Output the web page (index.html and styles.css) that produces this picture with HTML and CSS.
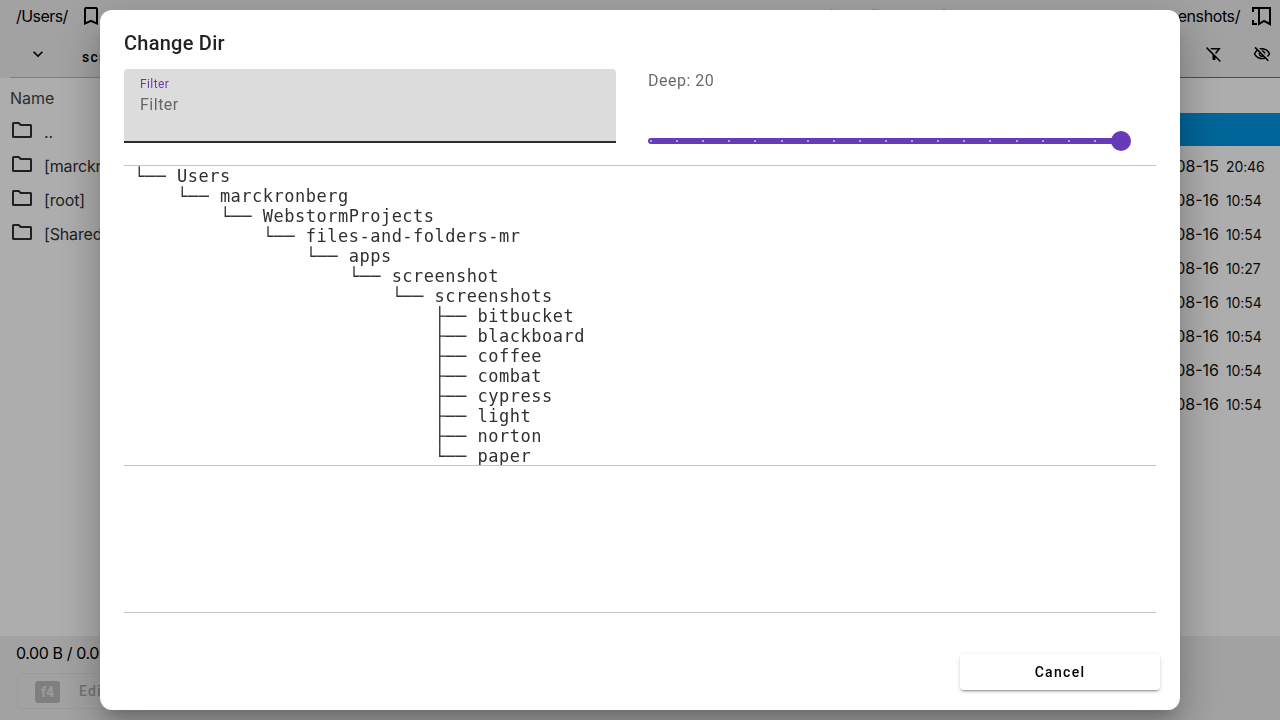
FILE: index.html
```html
<!DOCTYPE html>
<html lang="en">
<head>
<meta charset="utf-8">
<title>Change Dir</title>
<link rel="stylesheet" href="styles.css">
</head>
<body>
<svg class="defs"><symbol id="folder" viewBox="0 0 24 24"><path d="M3 5.500q0-.5.5-.5h5.200l2 2h9.800q.5 0 .5.5v11q0 .5-.5.5h-17q-.5 0-.5-.5z" fill="none" stroke="currentColor" stroke-width="2" stroke-linejoin="round"/></symbol></svg>
<div class="app">
  <header class="panes top">
    <section class="pane">
      <div class="path"><span>/Users/</span>
        <svg class="icon mark" viewBox="0 0 24 24"><path d="M17 3H7c-1.100 0-2 .9-2 2v16l7-3 7 3V5c0-1.100-.9-2-2-2zm0 15-5-2.180L7 18V5h10v13z"/></svg></div>
      <div class="tabs"><svg class="small chevron" viewBox="0 0 24 24"><path d="M7.400 8.600 12 13.200l4.600-4.600L18 10l-6 6-6-6z"/></svg><b>screenshots</b></div>
    </section>
    <section class="pane active">
      <div class="path end"><span>/Users/marckronberg/WebstormProjects/files-and-folders-mr/apps/screenshot/screenshots/</span>
        <svg class="icon multi" viewBox="0 0 24 24"><path d="M9 4h12v16l-6-3-5 3V4M9 4H4v4M4 16v4h4" fill="none" stroke="currentColor" stroke-width="2"/><path d="M19 18h3v4l-3-2z"/></svg></div>
      <div class="tabs tools">
        <svg class="tool" viewBox="0 0 24 24"><path d="M16.950 6l-3.570 4.550 1.430 1.430L20.780 4.400C21 4 21 4 20 4H6.830l2 2h8.120zM2.810 2.810 1.390 4.220 10 13v6c0 .55.45 1 1 1h2c.55 0 1-.45 1-1v-2.170l5.780 5.780 1.410-1.410z"/></svg>
        <svg class="tool" viewBox="0 0 24 24"><path d="M12 6c3.790 0 7.170 2.130 8.820 5.500-.59 1.220-1.420 2.270-2.410 3.120l1.410 1.410c1.390-1.230 2.490-2.770 3.180-4.530C21.270 7.110 17 4 12 4c-1.270 0-2.490.2-3.640.57l1.650 1.650C10.660 6.090 11.320 6 12 6zm-1.070 1.140L13 9.210c.57.25 1.030.71 1.280 1.280l2.070 2.070c.08-.34.14-.7.14-1.070C16.500 9.010 14.480 7 12 7c-.37 0-.72.050-1.070.14zM2.010 3.870l2.680 2.680C3.060 7.830 1.770 9.530 1 11.500 2.730 15.890 7 19 12 19c1.520 0 2.980-.29 4.320-.82l3.420 3.420 1.410-1.410L3.420 2.450 2.010 3.870zm7.500 7.500 2.610 2.610c-.04.01-.08.02-.12.02-1.380 0-2.500-1.120-2.500-2.500 0-.05.01-.08.01-.13zm-3.400-3.400 1.750 1.750c-.23.55-.36 1.150-.36 1.780 0 2.480 2.020 4.500 4.500 4.500.63 0 1.230-.13 1.770-.36l.98.98c-.88.24-1.800.38-2.750.38-3.790 0-7.170-2.130-8.820-5.500.7-1.430 1.720-2.610 2.930-3.530z"/></svg>
      </div>
    </section>
  </header>
  <main class="panes files">
    <section class="list">
      <div class="head">Name</div>
      <div class="row"><svg class="icon"><use href="#folder"/></svg><span>..</span></div>
      <div class="row"><svg class="icon"><use href="#folder"/></svg><span>[marckronberg]</span></div>
      <div class="row"><svg class="icon"><use href="#folder"/></svg><span>[root]</span></div>
      <div class="row"><svg class="icon"><use href="#folder"/></svg><span>[Shared]</span></div>
    </section>
    <section class="list dates">
      <div class="head"></div>
      <div class="row selected"></div>
      <div class="row">2023-08-15<small>20:46</small></div>
      <div class="row">2023-08-16<small>10:54</small></div>
      <div class="row">2023-08-16<small>10:54</small></div>
      <div class="row">2023-08-16<small>10:27</small></div>
      <div class="row">2023-08-16<small>10:54</small></div>
      <div class="row">2023-08-16<small>10:54</small></div>
      <div class="row">2023-08-16<small>10:54</small></div>
      <div class="row">2023-08-16<small>10:54</small></div>
    </section>
  </main>
  <footer class="foot">
    <div class="status">0.00 B / 0.00 B</div>
    <div class="action"><kbd>f4</kbd><span>Edit</span></div>
  </footer>
</div>
<div class="backdrop">
  <div class="dialog" role="dialog">
    <h2>Change Dir</h2>
    <div class="form">
      <label class="field"><span class="label">Filter</span><span class="hint">Filter</span></label>
      <div class="deep"><div>Deep: 20</div>
        <div class="slider"><div class="ticks"><i></i><i></i><i></i><i></i><i></i><i></i><i></i><i></i><i></i><i></i><i></i><i></i><i></i><i></i><i></i><i></i><i></i><i></i><i></i></div><div class="thumb"></div></div>
      </div>
    </div>
    <pre class="tree">└── Users
    └── marckronberg
        └── WebstormProjects
            └── files-and-folders-mr
                └── apps
                    └── screenshot
                        └── screenshots
                            ├── bitbucket
                            ├── blackboard
                            ├── coffee
                            ├── combat
                            ├── cypress
                            ├── light
                            ├── norton
                            └── paper</pre>
    <div class="blank"></div>
    <div class="actions"><button>Cancel</button></div>
  </div>
</div>
</body>
</html>
```
FILE: styles.css
```css
* { box-sizing: border-box; }
body { margin: 0; width: 1280px; height: 720px; overflow: hidden; font: 16px Inter, sans-serif; color: #000; }
.defs { display: none; }
svg { fill: currentColor; flex: none; }
.icon { width: 24px; height: 24px; }
.app { height: 720px; display: flex; flex-direction: column; background: #fff; }
.panes { display: grid; grid-template-columns: 640px 640px; }
.top { height: 78px; background: #efefef; }
.pane { min-width: 0; }
.path { height: 32px; padding-left: 16px; display: flex; align-items: center; white-space: nowrap; letter-spacing: -.55px; }
.mark { margin-left: 11px; }
.end { justify-content: flex-end; padding: 0 7px 0 0; letter-spacing: -.4px; }
.multi { margin-left: 9px; }
.tabs { height: 46px; margin-left: 10px; padding: 0 0 2px 18px; display: flex; align-items: center; border-bottom: 1px solid #bbb; }
.small { width: 20px; height: 20px; }
.tabs b { margin: 7px 0 0 34px; font: 500 14px Roboto, sans-serif; letter-spacing: 1.25px; }
.active .tabs { margin-left: 0; border-color: #0096e0; }
.tools { justify-content: flex-end; gap: 30px; padding-right: 9px; }
.tool { width: 18px; height: 18px; }
.files { flex: 1; }
.head { height: 35px; padding: 11px 10px; line-height: 19px; color: #444; }
.row { height: 34px; padding: 0 10px; display: flex; align-items: center; gap: 10px; color: #303030; letter-spacing: -.15px; }
.list .icon { margin-top: -1px; }
.row span { padding-top: 3px; }
.dates .row { justify-content: flex-end; padding: 4px 18px 0 0; gap: 7px; color: #111; letter-spacing: 0; }
.dates small { width: 36px; font-size: 14px; letter-spacing: -.1px; white-space: nowrap; }
.dates .selected { height: 33px; margin-bottom: 1px; background: #0096e0; }
.foot { height: 84px; padding: 8px 16px; background: #efefef; }
.status { line-height: 19px; letter-spacing: -.4px; }
.action { width: 120px; height: 36px; margin: 10px 0 0 1px; padding-left: 17px; border: 1px solid #e5e5e5; border-radius: 4px; display: flex; align-items: center; gap: 19px; color: #aaa; font: 500 14px Roboto, sans-serif; letter-spacing: 1.25px; }
kbd { width: 25px; height: 22px; margin-top: 1px; border-radius: 3px; background: #bbb; color: #e3e3e3; font: bold 14px/22px Roboto, sans-serif; letter-spacing: 0; text-align: center; }
.backdrop { position: fixed; inset: 0; background: rgba(0,0,0,.32); padding: 10px 100px; font-family: Roboto, sans-serif; }
.dialog { height: 700px; border-radius: 12px; background: #fff; padding: 0 24px; box-shadow: 0 11px 15px -7px rgba(0,0,0,.2), 0 24px 38px 3px rgba(0,0,0,.14), 0 9px 46px 8px rgba(0,0,0,.12); }
h2 { margin: 0; height: 59px; padding-top: 17px; font: 500 20px/32px Roboto, sans-serif; letter-spacing: .25px; color: rgba(0,0,0,.87); }
.form { height: 96px; display: grid; grid-template-columns: 492px 492px; gap: 32px; }
.field { height: 74px; padding: 8px 16px; background: #dcdcdc; border-bottom: 2px solid #2b2b2b; border-radius: 4px 4px 0 0; }
.label, .hint { display: block; }
.label { font-size: 12px; line-height: 14px; letter-spacing: .4px; color: #673ab7; }
.hint { margin-top: 4px; line-height: 19px; letter-spacing: .5px; color: #666; }
.deep { letter-spacing: .5px; line-height: 24px; color: rgba(0,0,0,.6); }
.slider { width: 476px; height: 6px; margin-top: 45px; border-radius: 3px; background: #673ab7; position: relative; }
.ticks { display: flex; justify-content: space-between; align-items: center; height: 6px; padding: 0 2px; }
.ticks i { width: 2px; height: 2px; border-radius: 1px; background: #fff; opacity: .7; }
.thumb { position: absolute; right: -7px; top: -7px; width: 20px; height: 20px; border-radius: 50%; background: #673ab7; }
.tree { height: 301px; margin: 0; padding: 0 10px; overflow: hidden; border: solid #c5c5c5; border-width: 1px 0; font: 17px/20px "DejaVu Sans Mono", monospace; letter-spacing: .5px; color: #303030; }
.blank { height: 147px; border-bottom: 1px solid #c8c8c8; }
.actions { display: flex; justify-content: flex-end; margin: 41px -4px 0 0; }
button { width: 200px; height: 36px; border: 0; border-radius: 4px; background: #fff; color: #000; font: 500 14px Roboto, sans-serif; letter-spacing: 1.3px; box-shadow: 0 3px 1px -2px rgba(0,0,0,.2), 0 2px 2px rgba(0,0,0,.14), 0 1px 5px rgba(0,0,0,.12); }
```
